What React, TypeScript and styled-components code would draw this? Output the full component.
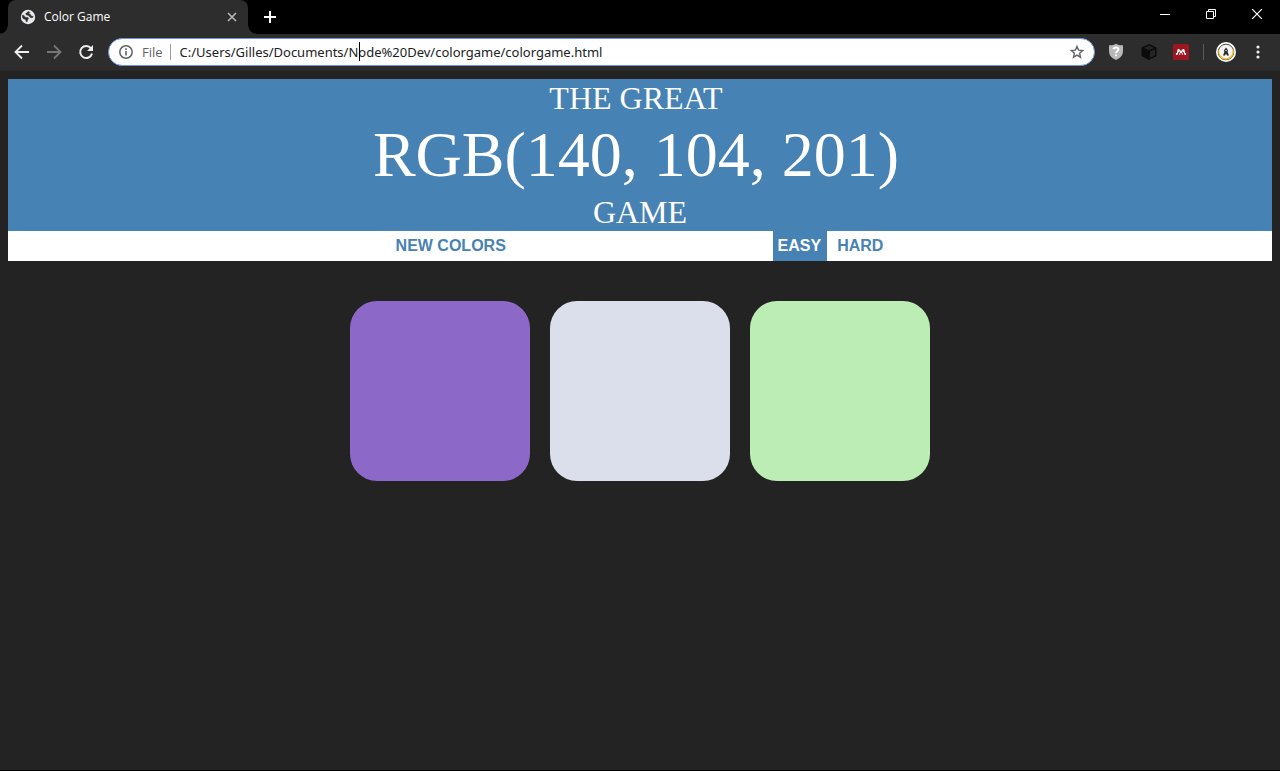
import React from "react";
import styled, { createGlobalStyle } from "styled-components";

const GlobalStyle = createGlobalStyle`
  *, *::before, *::after { box-sizing: border-box; }
  body { margin: 0; background: #232323; }
  button { border: 0; margin: 0; font: inherit; color: inherit; cursor: pointer; }
`;

const uiFont = `"Open Sans", "Segoe UI", sans-serif`;

const Window = styled.div`
  display: flex;
  flex-direction: column;
  min-height: 100vh;
  border-bottom: 1px solid #000;
  background: #232323;
`;

const TabStrip = styled.div`
  display: flex;
  align-items: stretch;
  height: 34px;
  padding-left: 8px;
  background: #000;
  color: #fff;
  font-family: ${uiFont};
`;

const Tab = styled.div`
  position: relative;
  display: flex;
  align-items: center;
  width: 240px;
  padding: 0 10px 0 12px;
  border-radius: 8px 8px 0 0;
  background: #2d2d2d;

  &::before,
  &::after {
    content: "";
    position: absolute;
    bottom: 0;
    width: 8px;
    height: 8px;
  }
  &::before {
    right: 100%;
    background: radial-gradient(circle at 0 0, #000 7px, #2d2d2d 8px);
  }
  &::after {
    left: 100%;
    background: radial-gradient(circle at 100% 0, #000 7px, #2d2d2d 8px);
  }
`;

const TabTitle = styled.span`
  flex: 1;
  padding-left: 8px;
  font-size: 12px;
  line-height: 16px;
`;

const IconButton = styled.button<{ $width: number }>`
  display: flex;
  align-items: center;
  justify-content: center;
  flex: none;
  width: ${(p) => p.$width}px;
  padding: 0;
  background: transparent;
`;

const WindowControls = styled.div`
  display: flex;
  height: 28px;
  margin-left: auto;
`;

const Toolbar = styled.div`
  display: flex;
  align-items: center;
  height: 37px;
  padding: 0 6px;
  border-bottom: 1px solid #272727;
  background: #2d2d2d;
  font-family: ${uiFont};
`;

const AddressBar = styled.div`
  display: flex;
  align-items: center;
  flex: 1;
  height: 28px;
  margin: 0 4px 0 6px;
  padding: 0 9px;
  border: 1px solid #6f94dc;
  border-radius: 14px;
  background: #fff;
  color: #5f6368;
`;

const SchemeLabel = styled.label`
  padding: 0 7px 0 8px;
  border-right: 1px solid #9a9da1;
  font-size: 13px;
  line-height: 16px;
`;

const UrlField = styled.div`
  position: relative;
  display: flex;
  flex: 1;
`;

const UrlInput = styled.input`
  flex: 1;
  min-width: 0;
  padding: 0 0 0 9px;
  border: 0;
  outline: 0;
  background: transparent;
  color: #202124;
  font-family: "Noto Sans", "Segoe UI", sans-serif;
  font-size: 13px;
  line-height: 20px;
`;

const Caret = styled.span`
  position: absolute;
  top: 0;
  left: 188px;
  width: 1px;
  height: 19px;
  background: #000;
`;

const Divider = styled.span`
  width: 1px;
  height: 16px;
  margin: 0 5px 0 6px;
  background: #5a5a5a;
`;

const Page = styled.main`
  padding: 8px;
`;

const Banner = styled.h1`
  display: flex;
  flex-direction: column;
  align-items: center;
  margin: 0;
  background: steelblue;
  color: #fff;
  font-family: "Liberation Serif", "Times New Roman", serif;
  font-size: 32px;
  font-weight: 400;
  line-height: 38px;
  text-transform: uppercase;
`;

const BannerLine = styled.span<{ $shifted?: boolean }>`
  padding-right: ${(p) => (p.$shifted ? 8 : 0)}px;
`;

const ColorName = styled(BannerLine)`
  font-size: 64px;
  line-height: 76px;
`;

const Stripe = styled.div`
  display: flex;
  justify-content: center;
  height: 30px;
  background: #fff;
`;

const Message = styled.span`
  width: 20%;
  margin: 0 4px;
`;

const GameButton = styled.button<{ $selected?: boolean; $spaced?: boolean }>`
  padding: 0 6px 1px 5px;
  margin-left: ${(p) => (p.$spaced ? 5 : 0)}px;
  background: ${(p) => (p.$selected ? "steelblue" : "#fff")};
  color: ${(p) => (p.$selected ? "#fff" : "steelblue")};
  font-family: "Liberation Sans", Arial, sans-serif;
  font-size: 16px;
  font-weight: 700;
  text-transform: uppercase;
`;

const Board = styled.div`
  display: grid;
  grid-template-columns: repeat(3, 1fr);
  gap: 20px;
  max-width: 580px;
  margin: 40px auto 0;
`;

const Square = styled.button<{ $color: string }>`
  aspect-ratio: 1;
  padding: 0;
  border-radius: 15%;
  background: ${(p) => p.$color};
`;

const colors = ["rgb(140, 104, 201)", "rgb(219, 222, 235)", "rgb(187, 237, 180)"];

const GlobeIcon = () => (
  <svg width="16" height="16" viewBox="0 0 16 16">
    <circle cx="8" cy="8" r="7.2" fill="#e8eaed" />
    <path
      d="M2.400 6.200 4 6.400 5 8.200 8 8.600 8.600 9.800 7.400 11 7.200 12.800 6 12.600 5.800 10.600 3.400 9.800 2.400 8.400zM9 2.600 7 3.400 5.800 4.800 6.400 6 8.400 6.200 9.400 7.600 10.600 8.800 12.800 8.600 13.200 7.400 11.200 7 10.400 5.400 8.600 4.800 9.800 3.600z"
      fill="#2d2d2d"
      stroke="#2d2d2d"
      strokeWidth=".5"
      strokeLinejoin="round"
    />
  </svg>
);

const ArrowIcon = ({ color = "#eee", flip = false }: { color?: string; flip?: boolean }) => (
  <svg width="16" height="16" viewBox="0 0 16 16" fill="none" stroke={color} strokeWidth="1.8">
    <path d={flip ? "M1 8H14M8 1.5 14.5 8 8 14.5" : "M15 8H2M8 1.5 1.5 8 8 14.5"} />
  </svg>
);

const ReloadIcon = () => (
  <svg width="16" height="16" viewBox="0 0 16 16">
    <path d="M13 4.4A6 6 0 1 0 14 9.5" fill="none" stroke="#eee" strokeWidth="2" />
    <path d="M15 1V7H9z" fill="#eee" />
  </svg>
);

const InfoIcon = () => (
  <svg width="16" height="16" viewBox="0 0 16 16">
    <circle cx="8" cy="8" r="6.2" fill="none" stroke="#5f6368" strokeWidth="1.5" />
    <path d="M8 7v4.5M8 4.3v1.6" stroke="#5f6368" strokeWidth="1.6" />
  </svg>
);

const StarIcon = () => (
  <svg width="16" height="16" viewBox="0 0 16 16">
    <path
      d="M8 2.4 9.6 6.2 13.7 6.5 10.6 9.2 11.5 13.2 8 11.1 4.5 13.2 5.4 9.2 2.3 6.5 6.4 6.2z"
      fill="none"
      stroke="#5f6368"
      strokeWidth="1.4"
    />
  </svg>
);

const ShieldIcon = () => (
  <svg width="16" height="18" viewBox="0 0 16 18">
    <path d="M8 .8C10 2 12.5 2.4 15 2.3V8c0 4.500-3 7.400-7 9-4-1.600-7-4.500-7-9V2.300C3.500 2.400 6 2 8 .8z" fill="#b8b8b8" />
    <path d="M5.6 6.3C5.7 3.9 10.4 3.9 10.4 6.5 10.4 8.2 8 8.2 8 10.2M8 11.4v1.9" fill="none" stroke="#fff" strokeWidth="2" />
  </svg>
);

const CubeIcon = () => (
  <svg width="16" height="16" viewBox="0 0 16 16">
    <path d="M8 0 15.5 3.5V12L8 16 .5 12V3.5z" fill="#0b0b0b" />
    <path d="M8 1.6 13 4 8 6.2 3 4zM9 7.6 14 5.3V11.3L9 13.9z" fill="#252525" />
  </svg>
);

const MendeleyIcon = () => (
  <svg width="16" height="16" viewBox="0 0 16 16">
    <rect width="16" height="16" rx="1.5" fill="#9d1620" />
    <g fill="#fff">
      <circle cx="5.7" cy="6.4" r="1.3" />
      <circle cx="10.3" cy="6.4" r="1.3" />
      <circle cx="8" cy="7.9" r="1.4" />
      <circle cx="3.8" cy="10" r="1" />
      <circle cx="12.2" cy="10" r="1" />
      <circle cx="6.6" cy="10" r=".8" />
      <circle cx="9.4" cy="10" r=".8" />
      <path d="M4.6 6.5H6.5L5 9 4.600 10H3.500zM9.500 6.500H11.400L12.500 10H11.400L11 9z" />
    </g>
  </svg>
);

const AvatarIcon = () => (
  <svg width="20" height="20" viewBox="0 0 20 20">
    <circle cx="10" cy="10" r="10" fill="#fff" />
    <circle cx="10" cy="10" r="7.8" fill="#f4f4f4" stroke="#3a3420" strokeWidth=".9" />
    <path d="M4 14A7.4 7.4 0 0 0 17 7.500" fill="none" stroke="#f0b91d" strokeWidth="1.6" />
    <path d="M2.800 8A7.400 7.400 0 0 0 4 14" fill="none" stroke="#f0b91d" strokeWidth="1" />
    <path d="M10 5.5 12 8.2 11.6 10 13 13.5H11L10 11.5 9 13.5H7L8.4 10 8 8.2z" fill="#252525" />
    <circle cx="10" cy="8.5" r=".7" fill="#fff" />
  </svg>
);

export default function App() {
  return (
    <Window>
      <GlobalStyle />
      <TabStrip>
        <Tab>
          <GlobeIcon />
          <TabTitle>Color Game</TabTitle>
          <IconButton $width={12} aria-label="Close tab">
            <svg width="10" height="10" viewBox="0 0 10 10" stroke="#bbb" strokeWidth="1.5">
              <path d="M1 1 9 9M9 1 1 9" />
            </svg>
          </IconButton>
        </Tab>
        <IconButton $width={44} aria-label="New tab">
          <svg width="12" height="12" viewBox="0 0 12 12" stroke="#fff" strokeWidth="2">
            <path d="M6 0V12M0 6H12" />
          </svg>
        </IconButton>
        <WindowControls>
          <IconButton $width={46} aria-label="Minimize">
            <svg width="10" height="10" viewBox="0 0 10 10" stroke="#fff">
              <path d="M0 5.5H10" />
            </svg>
          </IconButton>
          <IconButton $width={46} aria-label="Restore">
            <svg width="10" height="10" viewBox="0 0 10 10" fill="none" stroke="#fff">
              <path d="M.5 2.5H7.5V9.5H.5zM2.5 2.5V.5H9.5V7.5H7.5" />
            </svg>
          </IconButton>
          <IconButton $width={46} aria-label="Close">
            <svg width="10" height="10" viewBox="0 0 10 10" stroke="#fff" strokeWidth="1.2">
              <path d="M0 0 10 10M10 0 0 10" />
            </svg>
          </IconButton>
        </WindowControls>
      </TabStrip>
      <Toolbar>
        <IconButton $width={32} aria-label="Back">
          <ArrowIcon />
        </IconButton>
        <IconButton $width={32} aria-label="Forward">
          <ArrowIcon color="#777" flip />
        </IconButton>
        <IconButton $width={32} aria-label="Reload">
          <ReloadIcon />
        </IconButton>
        <AddressBar>
          <InfoIcon />
          <SchemeLabel htmlFor="url">File</SchemeLabel>
          <UrlField>
            <UrlInput
              id="url"
              type="text"
              spellCheck={false}
              defaultValue="C:/Users/Gilles/Documents/Node%20Dev/colorgame/colorgame.html"
            />
            <Caret />
          </UrlField>
          <IconButton $width={16} aria-label="Bookmark">
            <StarIcon />
          </IconButton>
        </AddressBar>
        <IconButton $width={33} aria-label="Shield extension">
          <ShieldIcon />
        </IconButton>
        <IconButton $width={33} aria-label="Cube extension">
          <CubeIcon />
        </IconButton>
        <IconButton $width={32} aria-label="Mendeley extension">
          <MendeleyIcon />
        </IconButton>
        <Divider />
        <IconButton $width={33} aria-label="Profile">
          <AvatarIcon />
        </IconButton>
        <IconButton $width={32} aria-label="Menu">
          <svg width="4" height="14" viewBox="0 0 4 14" fill="#eee">
            <circle cx="2" cy="2" r="1.6" />
            <circle cx="2" cy="7" r="1.6" />
            <circle cx="2" cy="12" r="1.6" />
          </svg>
        </IconButton>
      </Toolbar>
      <Page>
        <Banner>
          <BannerLine $shifted>The Great</BannerLine>
          <ColorName $shifted>RGB(140, 104, 201)</ColorName>
          <BannerLine>Game</BannerLine>
        </Banner>
        <Stripe>
          <GameButton>New Colors</GameButton>
          <Message />
          <GameButton $selected>Easy</GameButton>
          <GameButton $spaced>Hard</GameButton>
        </Stripe>
        <Board>
          {colors.map((color) => (
            <Square key={color} $color={color} aria-label={color} />
          ))}
        </Board>
      </Page>
    </Window>
  );
}
